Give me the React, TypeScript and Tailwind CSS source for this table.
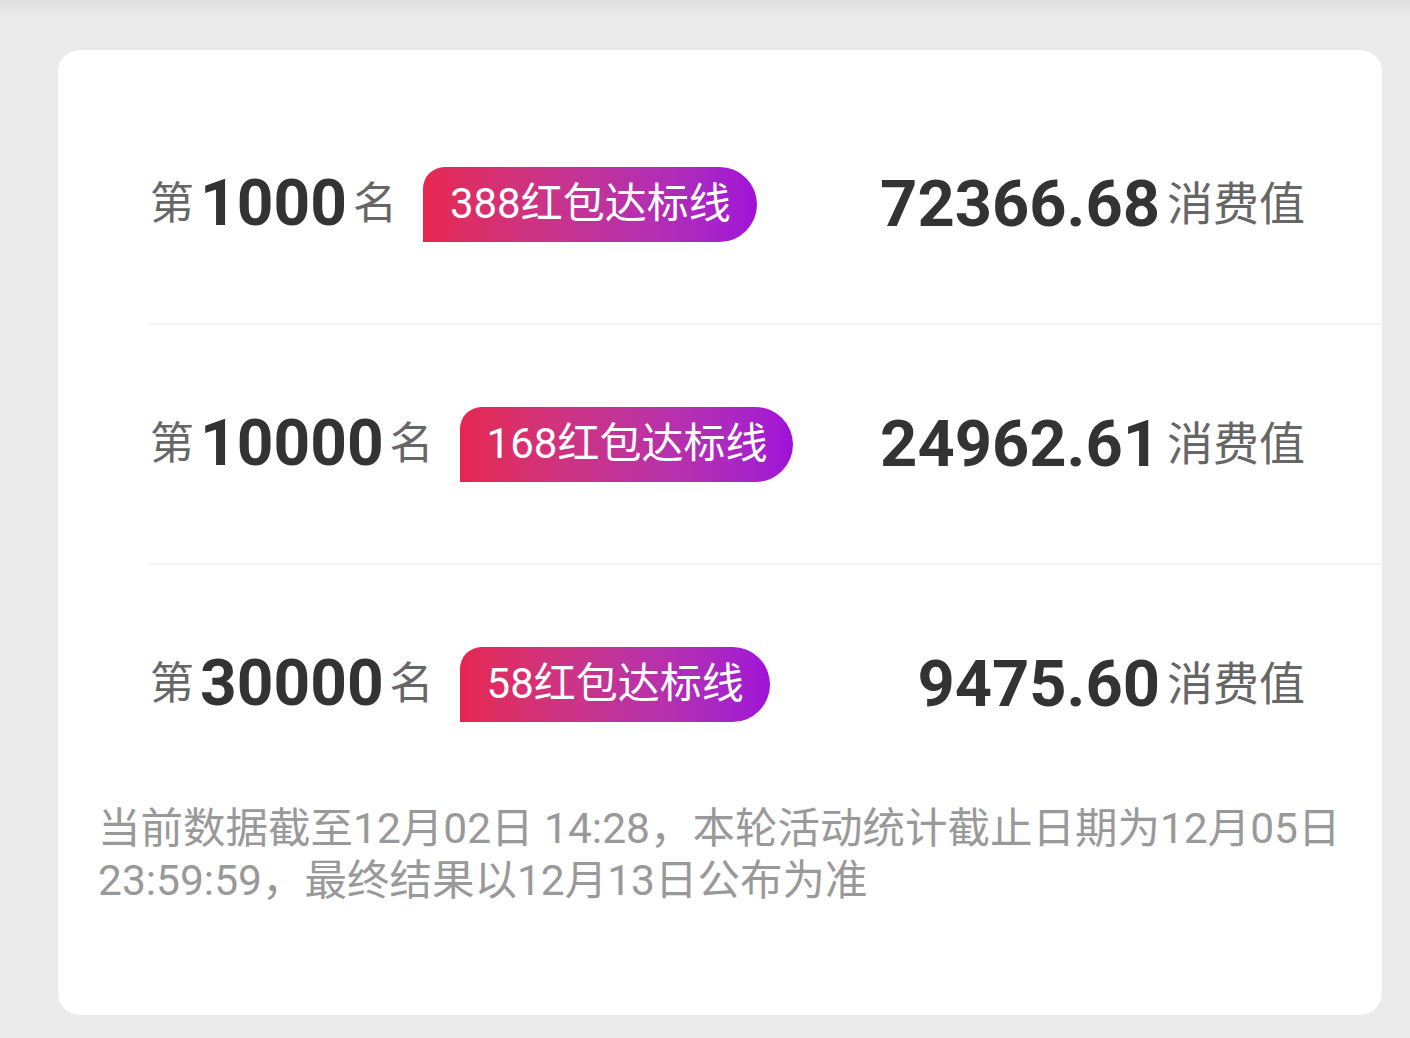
import React from 'react';

const rows = [
  { rank: '1000', badge: '388红包达标线', value: '72366.68' },
  { rank: '10000', badge: '168红包达标线', value: '24962.61' },
  { rank: '30000', badge: '58红包达标线', value: '9475.60' },
];

const font = { fontFamily: 'Roboto, "Noto Sans CJK SC", sans-serif' };

function RankRow({ rank, badge, value }: { rank: string; badge: string; value: string }) {
  return (
    <div className="h-[238px] flex items-center justify-between pr-[77px]">
      <div className="flex items-center">
        <span className="text-[44px] text-[#666] leading-none">第</span>
        <span className="text-[64px] font-bold text-[#333] leading-none ml-[6px] mr-[6px]">{rank}</span>
        <span className="text-[44px] text-[#666] leading-none">名</span>
        <span className="ml-[26px] h-[75px] flex items-center pl-[27px] pr-[26px] rounded-tl-[22px] rounded-r-[38px] bg-gradient-to-r from-[#e6264e] to-[#a010d8] text-white text-[42px] leading-none">
          {badge}
        </span>
      </div>
      <div className="flex items-center">
        <span className="text-[65px] font-bold text-[#333] leading-none">{value}</span>
        <span className="text-[46px] text-[#666] leading-none ml-[7px]">消费值</span>
      </div>
    </div>
  );
}

export default function App() {
  return (
    <div className="w-[1410px] h-[1038px] bg-[#eaeaea] relative overflow-hidden" style={font}>
      {/* top shade */}
      <div className="absolute top-0 left-0 right-0 h-[16px] bg-gradient-to-b from-[#dedede] to-[#eaeaea]" />

      <div className="pt-[50px] pl-[58px] pr-[28px]">
        <div className="bg-white rounded-[22px] h-[965px] pt-[35px]">
          <div className="ml-[92px]">
            {rows.map((r, i) => (
              <div key={r.rank}>
                {i > 0 && <div className="h-[2px] bg-[#f3f3f3]" />}
                <RankRow {...r} />
              </div>
            ))}
          </div>

          {/* Footer note */}
          <p className="px-[40px] text-[42.5px] leading-[52px] text-[#999]">
            当前数据截至12月02日 14:28，本轮活动统计截止日期为12月05日
            <br />
            23:59:59，最终结果以12月13日公布为准
          </p>
        </div>
      </div>
    </div>
  );
}
